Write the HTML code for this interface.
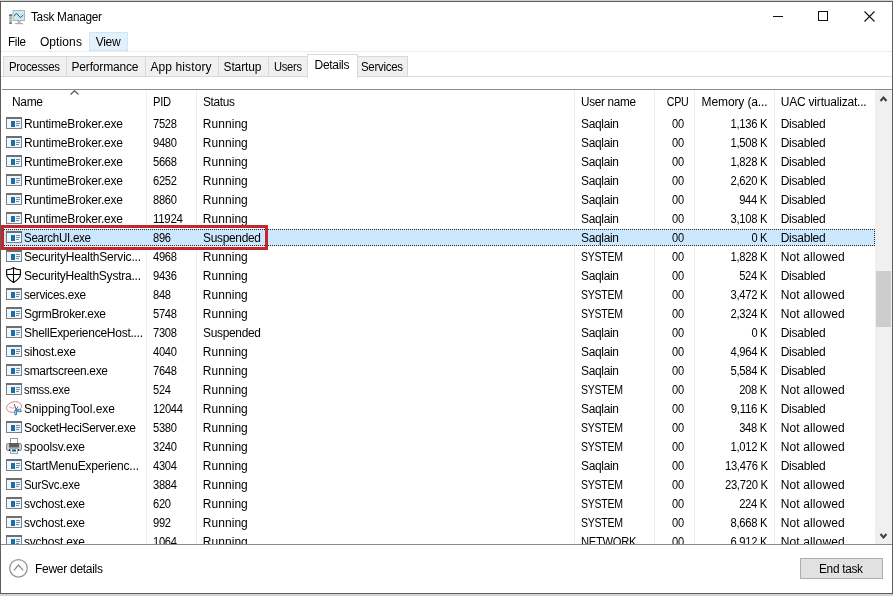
<!DOCTYPE html>
<html><head><meta charset="utf-8"><title>Task Manager</title>
<style>
html,body{margin:0;padding:0;}
body{width:893px;height:596px;overflow:hidden;position:relative;background:#d2d2d2;font-family:"Liberation Sans",sans-serif;}
#win{position:absolute;left:0;top:1px;width:891px;height:591px;border:1px solid #5e5e5e;background:#fff;}
#c{position:absolute;left:0;top:0;width:893px;height:596px;overflow:hidden;will-change:transform;}
.t{position:absolute;white-space:pre;line-height:16px;height:16px;}
.b{position:absolute;}
.ic{position:absolute;}
#list{position:absolute;left:0;top:0;width:893px;height:544px;overflow:hidden;}
</style></head><body>
<div id="win"></div>
<div id="c">

<svg class="ic" style="left:8px;top:9px" width="18" height="16" viewBox="0 0 18 16"><rect x="5" y="1.5" width="11.5" height="10" fill="#c9e9f6" stroke="#aeb4b8"/><path d="M6 7.2 L8.4 4.2 L12.4 8.6 L15.2 6" fill="none" stroke="#3d5866" stroke-width="1"/><rect x="9.5" y="12" width="3" height="2" fill="#b9bdc0"/><rect x="7" y="14" width="8" height="1.2" fill="#a9adb0"/><rect x="1.2" y="5.5" width="2.7" height="9.3" fill="#b4b4b4"/><rect x="1.2" y="5.5" width="2.7" height="1.3" fill="#4a4a4a"/><rect x="1.2" y="13.6" width="2.7" height="1.2" fill="#666"/></svg>
<span class="t" style="left:31.20px;top:8.84px;font-size:12.0px;letter-spacing:-0.300px;color:#000;transform:scaleX(0.9852);transform-origin:left center;">Task Manager</span>
<div class="b" style="left:773px;top:16px;width:10px;height:1px;background:#111"></div>
<div class="b" style="left:818px;top:11px;width:8px;height:8px;border:1px solid #111"></div>
<svg class="ic" style="left:864px;top:11px" width="11" height="11" viewBox="0 0 11 11"><path d="M0.5 0.5 L10.5 10.5 M10.5 0.5 L0.5 10.5" stroke="#111" stroke-width="1.1" fill="none"/></svg>
<div class="b" style="left:89px;top:32px;width:37px;height:17px;background:#e3f1fd;border:1px solid #cfe5f8"></div>
<span class="t" style="left:7.90px;top:33.84px;font-size:12.0px;letter-spacing:-0.300px;color:#000;transform:scaleX(0.9764);transform-origin:left center;">File</span>
<span class="t" style="left:39.90px;top:33.84px;font-size:12.0px;letter-spacing:0.108px;color:#000;">Options</span>
<span class="t" style="left:95.70px;top:33.84px;font-size:12.0px;letter-spacing:-0.264px;color:#000;">View</span>
<div class="b" style="left:1px;top:51px;width:891px;height:1px;background:#ececec"></div>
<div class="b" style="left:1px;top:76px;width:891px;height:1px;background:#dcdcdc"></div>
<div class="b" style="left:3px;top:56px;width:62px;height:19px;background:#f0f0f0;border:1px solid #d9d9d9"></div>
<span class="t" style="left:8.50px;top:58.84px;font-size:12.0px;letter-spacing:-0.300px;color:#000;transform:scaleX(0.9511);transform-origin:left center;">Processes</span>
<div class="b" style="left:66px;top:56px;width:78px;height:19px;background:#f0f0f0;border:1px solid #d9d9d9"></div>
<span class="t" style="left:71.50px;top:58.84px;font-size:12.0px;letter-spacing:-0.170px;color:#000;">Performance</span>
<div class="b" style="left:145px;top:56px;width:72px;height:19px;background:#f0f0f0;border:1px solid #d9d9d9"></div>
<span class="t" style="left:150.50px;top:58.84px;font-size:12.0px;letter-spacing:0.097px;color:#000;">App history</span>
<div class="b" style="left:218px;top:56px;width:49px;height:19px;background:#f0f0f0;border:1px solid #d9d9d9"></div>
<span class="t" style="left:223.50px;top:58.84px;font-size:12.0px;letter-spacing:-0.115px;color:#000;">Startup</span>
<div class="b" style="left:268px;top:56px;width:39px;height:19px;background:#f0f0f0;border:1px solid #d9d9d9"></div>
<span class="t" style="left:273.50px;top:58.84px;font-size:12.0px;letter-spacing:-0.300px;color:#000;transform:scaleX(0.9291);transform-origin:left center;">Users</span>
<div class="b" style="left:307px;top:54px;width:49px;height:23px;background:#fff;border:1px solid #d9d9d9;border-bottom:none"></div>
<span class="t" style="left:314.50px;top:56.84px;font-size:12.0px;letter-spacing:-0.280px;color:#000;">Details</span>
<div class="b" style="left:357px;top:56px;width:49px;height:19px;background:#f0f0f0;border:1px solid #d9d9d9"></div>
<span class="t" style="left:360.50px;top:58.84px;font-size:12.0px;letter-spacing:-0.300px;color:#000;transform:scaleX(0.9564);transform-origin:left center;">Services</span>
<div id="list">
<div class="b" style="left:2px;top:89px;width:890px;height:1px;background:#8a8a8a"></div>
<div class="b" style="left:146px;top:90px;width:1px;height:454px;background:#eeeeee"></div>
<div class="b" style="left:196px;top:90px;width:1px;height:454px;background:#eeeeee"></div>
<div class="b" style="left:574px;top:90px;width:1px;height:454px;background:#eeeeee"></div>
<div class="b" style="left:654px;top:90px;width:1px;height:454px;background:#eeeeee"></div>
<div class="b" style="left:694px;top:90px;width:1px;height:454px;background:#eeeeee"></div>
<div class="b" style="left:774px;top:90px;width:1px;height:454px;background:#eeeeee"></div>
<svg class="ic" style="left:70px;top:90px" width="9" height="5" viewBox="0 0 9 5"><path d="M0.5 4.5 L4.5 0.7 L8.5 4.5" fill="none" stroke="#555" stroke-width="1.2"/></svg>
<span class="t" style="left:11.80px;top:93.84px;font-size:12.0px;letter-spacing:-0.300px;color:#000;transform:scaleX(0.9965);transform-origin:left center;">Name</span>
<span class="t" style="left:152.70px;top:93.84px;font-size:12.0px;letter-spacing:-0.300px;color:#000;transform:scaleX(0.9276);transform-origin:left center;">PID</span>
<span class="t" style="left:202.80px;top:93.84px;font-size:12.0px;letter-spacing:-0.300px;color:#000;transform:scaleX(0.9840);transform-origin:left center;">Status</span>
<span class="t" style="left:580.50px;top:93.84px;font-size:12.0px;letter-spacing:-0.300px;color:#000;transform:scaleX(0.9771);transform-origin:left center;">User name</span>
<span class="t" style="right:204.77px;top:93.84px;font-size:12.0px;letter-spacing:-0.300px;color:#000;transform:scaleX(0.8894);transform-origin:right center;">CPU</span>
<span class="t" style="left:701.60px;top:93.84px;font-size:12.0px;letter-spacing:-0.122px;color:#000;">Memory (a...</span>
<span class="t" style="left:780.70px;top:93.84px;font-size:12.0px;letter-spacing:-0.197px;color:#000;">UAC virtualizat...</span>
<div class="b" style="left:3px;top:229px;width:870px;height:15px;background:#cce8ff;border:1px dotted #2a2a2a"></div>
<svg class="ic" style="left:6px;top:117px" width="16" height="12" viewBox="0 0 16 12"><rect x="0.5" y="0.5" width="15" height="11" fill="#eef7fd" stroke="#7f7f7f"/><rect x="0" y="0" width="16" height="2" fill="#6f6f6f"/><rect x="5" y="4" width="4" height="6" fill="#1f6ea6"/><rect x="10" y="4" width="4" height="1" fill="#6f8ea6"/><rect x="10" y="6" width="4" height="1" fill="#6f8ea6"/><rect x="10" y="8" width="3" height="1" fill="#6f8ea6"/></svg>
<span class="t" style="left:24.00px;top:115.84px;font-size:12.0px;letter-spacing:-0.190px;color:#000;">RuntimeBroker.exe</span>
<span class="t" style="left:152.70px;top:115.84px;font-size:12.0px;letter-spacing:-0.300px;color:#000;transform:scaleX(0.9305);transform-origin:left center;">7528</span>
<span class="t" style="left:202.80px;top:115.84px;font-size:12.0px;letter-spacing:0.050px;color:#000;">Running</span>
<span class="t" style="left:580.50px;top:115.84px;font-size:12.0px;letter-spacing:-0.300px;color:#000;transform:scaleX(0.9940);transform-origin:left center;">Saqlain</span>
<span class="t" style="right:208.78px;top:115.84px;font-size:12.0px;letter-spacing:-0.300px;color:#000;transform:scaleX(0.9198);transform-origin:right center;">00</span>
<span class="t" style="right:125.68px;top:115.84px;font-size:12.0px;letter-spacing:-0.300px;color:#000;transform:scaleX(0.9351);transform-origin:right center;">1,136 K</span>
<span class="t" style="left:780.70px;top:115.84px;font-size:12.0px;letter-spacing:-0.242px;color:#000;">Disabled</span>
<svg class="ic" style="left:6px;top:136px" width="16" height="12" viewBox="0 0 16 12"><rect x="0.5" y="0.5" width="15" height="11" fill="#eef7fd" stroke="#7f7f7f"/><rect x="0" y="0" width="16" height="2" fill="#6f6f6f"/><rect x="5" y="4" width="4" height="6" fill="#1f6ea6"/><rect x="10" y="4" width="4" height="1" fill="#6f8ea6"/><rect x="10" y="6" width="4" height="1" fill="#6f8ea6"/><rect x="10" y="8" width="3" height="1" fill="#6f8ea6"/></svg>
<span class="t" style="left:24.00px;top:134.84px;font-size:12.0px;letter-spacing:-0.190px;color:#000;">RuntimeBroker.exe</span>
<span class="t" style="left:152.70px;top:134.84px;font-size:12.0px;letter-spacing:-0.300px;color:#000;transform:scaleX(0.9305);transform-origin:left center;">9480</span>
<span class="t" style="left:202.80px;top:134.84px;font-size:12.0px;letter-spacing:0.050px;color:#000;">Running</span>
<span class="t" style="left:580.50px;top:134.84px;font-size:12.0px;letter-spacing:-0.300px;color:#000;transform:scaleX(0.9940);transform-origin:left center;">Saqlain</span>
<span class="t" style="right:208.78px;top:134.84px;font-size:12.0px;letter-spacing:-0.300px;color:#000;transform:scaleX(0.9198);transform-origin:right center;">00</span>
<span class="t" style="right:125.68px;top:134.84px;font-size:12.0px;letter-spacing:-0.300px;color:#000;transform:scaleX(0.9351);transform-origin:right center;">1,508 K</span>
<span class="t" style="left:780.70px;top:134.84px;font-size:12.0px;letter-spacing:-0.242px;color:#000;">Disabled</span>
<svg class="ic" style="left:6px;top:155px" width="16" height="12" viewBox="0 0 16 12"><rect x="0.5" y="0.5" width="15" height="11" fill="#eef7fd" stroke="#7f7f7f"/><rect x="0" y="0" width="16" height="2" fill="#6f6f6f"/><rect x="5" y="4" width="4" height="6" fill="#1f6ea6"/><rect x="10" y="4" width="4" height="1" fill="#6f8ea6"/><rect x="10" y="6" width="4" height="1" fill="#6f8ea6"/><rect x="10" y="8" width="3" height="1" fill="#6f8ea6"/></svg>
<span class="t" style="left:24.00px;top:153.84px;font-size:12.0px;letter-spacing:-0.190px;color:#000;">RuntimeBroker.exe</span>
<span class="t" style="left:152.70px;top:153.84px;font-size:12.0px;letter-spacing:-0.300px;color:#000;transform:scaleX(0.9305);transform-origin:left center;">5668</span>
<span class="t" style="left:202.80px;top:153.84px;font-size:12.0px;letter-spacing:0.050px;color:#000;">Running</span>
<span class="t" style="left:580.50px;top:153.84px;font-size:12.0px;letter-spacing:-0.300px;color:#000;transform:scaleX(0.9940);transform-origin:left center;">Saqlain</span>
<span class="t" style="right:208.78px;top:153.84px;font-size:12.0px;letter-spacing:-0.300px;color:#000;transform:scaleX(0.9198);transform-origin:right center;">00</span>
<span class="t" style="right:125.68px;top:153.84px;font-size:12.0px;letter-spacing:-0.300px;color:#000;transform:scaleX(0.9351);transform-origin:right center;">1,828 K</span>
<span class="t" style="left:780.70px;top:153.84px;font-size:12.0px;letter-spacing:-0.242px;color:#000;">Disabled</span>
<svg class="ic" style="left:6px;top:174px" width="16" height="12" viewBox="0 0 16 12"><rect x="0.5" y="0.5" width="15" height="11" fill="#eef7fd" stroke="#7f7f7f"/><rect x="0" y="0" width="16" height="2" fill="#6f6f6f"/><rect x="5" y="4" width="4" height="6" fill="#1f6ea6"/><rect x="10" y="4" width="4" height="1" fill="#6f8ea6"/><rect x="10" y="6" width="4" height="1" fill="#6f8ea6"/><rect x="10" y="8" width="3" height="1" fill="#6f8ea6"/></svg>
<span class="t" style="left:24.00px;top:172.84px;font-size:12.0px;letter-spacing:-0.190px;color:#000;">RuntimeBroker.exe</span>
<span class="t" style="left:152.70px;top:172.84px;font-size:12.0px;letter-spacing:-0.300px;color:#000;transform:scaleX(0.9305);transform-origin:left center;">6252</span>
<span class="t" style="left:202.80px;top:172.84px;font-size:12.0px;letter-spacing:0.050px;color:#000;">Running</span>
<span class="t" style="left:580.50px;top:172.84px;font-size:12.0px;letter-spacing:-0.300px;color:#000;transform:scaleX(0.9940);transform-origin:left center;">Saqlain</span>
<span class="t" style="right:208.78px;top:172.84px;font-size:12.0px;letter-spacing:-0.300px;color:#000;transform:scaleX(0.9198);transform-origin:right center;">00</span>
<span class="t" style="right:125.68px;top:172.84px;font-size:12.0px;letter-spacing:-0.300px;color:#000;transform:scaleX(0.9351);transform-origin:right center;">2,620 K</span>
<span class="t" style="left:780.70px;top:172.84px;font-size:12.0px;letter-spacing:-0.242px;color:#000;">Disabled</span>
<svg class="ic" style="left:6px;top:193px" width="16" height="12" viewBox="0 0 16 12"><rect x="0.5" y="0.5" width="15" height="11" fill="#eef7fd" stroke="#7f7f7f"/><rect x="0" y="0" width="16" height="2" fill="#6f6f6f"/><rect x="5" y="4" width="4" height="6" fill="#1f6ea6"/><rect x="10" y="4" width="4" height="1" fill="#6f8ea6"/><rect x="10" y="6" width="4" height="1" fill="#6f8ea6"/><rect x="10" y="8" width="3" height="1" fill="#6f8ea6"/></svg>
<span class="t" style="left:24.00px;top:191.84px;font-size:12.0px;letter-spacing:-0.190px;color:#000;">RuntimeBroker.exe</span>
<span class="t" style="left:152.70px;top:191.84px;font-size:12.0px;letter-spacing:-0.300px;color:#000;transform:scaleX(0.9305);transform-origin:left center;">8860</span>
<span class="t" style="left:202.80px;top:191.84px;font-size:12.0px;letter-spacing:0.050px;color:#000;">Running</span>
<span class="t" style="left:580.50px;top:191.84px;font-size:12.0px;letter-spacing:-0.300px;color:#000;transform:scaleX(0.9940);transform-origin:left center;">Saqlain</span>
<span class="t" style="right:208.78px;top:191.84px;font-size:12.0px;letter-spacing:-0.300px;color:#000;transform:scaleX(0.9198);transform-origin:right center;">00</span>
<span class="t" style="right:125.68px;top:191.84px;font-size:12.0px;letter-spacing:-0.300px;color:#000;transform:scaleX(0.9284);transform-origin:right center;">944 K</span>
<span class="t" style="left:780.70px;top:191.84px;font-size:12.0px;letter-spacing:-0.242px;color:#000;">Disabled</span>
<svg class="ic" style="left:6px;top:212px" width="16" height="12" viewBox="0 0 16 12"><rect x="0.5" y="0.5" width="15" height="11" fill="#eef7fd" stroke="#7f7f7f"/><rect x="0" y="0" width="16" height="2" fill="#6f6f6f"/><rect x="5" y="4" width="4" height="6" fill="#1f6ea6"/><rect x="10" y="4" width="4" height="1" fill="#6f8ea6"/><rect x="10" y="6" width="4" height="1" fill="#6f8ea6"/><rect x="10" y="8" width="3" height="1" fill="#6f8ea6"/></svg>
<span class="t" style="left:24.00px;top:210.84px;font-size:12.0px;letter-spacing:-0.190px;color:#000;">RuntimeBroker.exe</span>
<span class="t" style="left:152.70px;top:210.84px;font-size:12.0px;letter-spacing:-0.300px;color:#000;transform:scaleX(0.9592);transform-origin:left center;">11924</span>
<span class="t" style="left:202.80px;top:210.84px;font-size:12.0px;letter-spacing:0.050px;color:#000;">Running</span>
<span class="t" style="left:580.50px;top:210.84px;font-size:12.0px;letter-spacing:-0.300px;color:#000;transform:scaleX(0.9940);transform-origin:left center;">Saqlain</span>
<span class="t" style="right:208.78px;top:210.84px;font-size:12.0px;letter-spacing:-0.300px;color:#000;transform:scaleX(0.9198);transform-origin:right center;">00</span>
<span class="t" style="right:125.68px;top:210.84px;font-size:12.0px;letter-spacing:-0.300px;color:#000;transform:scaleX(0.9351);transform-origin:right center;">3,108 K</span>
<span class="t" style="left:780.70px;top:210.84px;font-size:12.0px;letter-spacing:-0.242px;color:#000;">Disabled</span>
<svg class="ic" style="left:6px;top:231px" width="16" height="12" viewBox="0 0 16 12"><rect x="0.5" y="0.5" width="15" height="11" fill="#eef7fd" stroke="#7f7f7f"/><rect x="0" y="0" width="16" height="2" fill="#6f6f6f"/><rect x="5" y="4" width="4" height="6" fill="#1f6ea6"/><rect x="10" y="4" width="4" height="1" fill="#6f8ea6"/><rect x="10" y="6" width="4" height="1" fill="#6f8ea6"/><rect x="10" y="8" width="3" height="1" fill="#6f8ea6"/></svg>
<span class="t" style="left:24.00px;top:229.84px;font-size:12.0px;letter-spacing:-0.300px;color:#000;transform:scaleX(0.9654);transform-origin:left center;">SearchUI.exe</span>
<span class="t" style="left:152.70px;top:229.84px;font-size:12.0px;letter-spacing:-0.300px;color:#000;transform:scaleX(0.9269);transform-origin:left center;">896</span>
<span class="t" style="left:202.80px;top:229.84px;font-size:12.0px;letter-spacing:-0.300px;color:#000;transform:scaleX(0.9945);transform-origin:left center;">Suspended</span>
<span class="t" style="left:580.50px;top:229.84px;font-size:12.0px;letter-spacing:-0.300px;color:#000;transform:scaleX(0.9940);transform-origin:left center;">Saqlain</span>
<span class="t" style="right:208.78px;top:229.84px;font-size:12.0px;letter-spacing:-0.300px;color:#000;transform:scaleX(0.9198);transform-origin:right center;">00</span>
<span class="t" style="right:125.68px;top:229.84px;font-size:12.0px;letter-spacing:-0.300px;color:#000;transform:scaleX(0.9189);transform-origin:right center;">0 K</span>
<span class="t" style="left:780.70px;top:229.84px;font-size:12.0px;letter-spacing:-0.242px;color:#000;">Disabled</span>
<svg class="ic" style="left:6px;top:250px" width="16" height="12" viewBox="0 0 16 12"><rect x="0.5" y="0.5" width="15" height="11" fill="#eef7fd" stroke="#7f7f7f"/><rect x="0" y="0" width="16" height="2" fill="#6f6f6f"/><rect x="5" y="4" width="4" height="6" fill="#1f6ea6"/><rect x="10" y="4" width="4" height="1" fill="#6f8ea6"/><rect x="10" y="6" width="4" height="1" fill="#6f8ea6"/><rect x="10" y="8" width="3" height="1" fill="#6f8ea6"/></svg>
<span class="t" style="left:24.00px;top:248.84px;font-size:12.0px;letter-spacing:-0.199px;color:#000;">SecurityHealthServic...</span>
<span class="t" style="left:152.70px;top:248.84px;font-size:12.0px;letter-spacing:-0.300px;color:#000;transform:scaleX(0.9305);transform-origin:left center;">4968</span>
<span class="t" style="left:202.80px;top:248.84px;font-size:12.0px;letter-spacing:0.050px;color:#000;">Running</span>
<span class="t" style="left:580.50px;top:248.84px;font-size:12.0px;letter-spacing:-0.300px;color:#000;transform:scaleX(0.8778);transform-origin:left center;">SYSTEM</span>
<span class="t" style="right:208.78px;top:248.84px;font-size:12.0px;letter-spacing:-0.300px;color:#000;transform:scaleX(0.9198);transform-origin:right center;">00</span>
<span class="t" style="right:125.68px;top:248.84px;font-size:12.0px;letter-spacing:-0.300px;color:#000;transform:scaleX(0.9351);transform-origin:right center;">1,828 K</span>
<span class="t" style="left:780.70px;top:248.84px;font-size:12.0px;letter-spacing:0.130px;color:#000;">Not allowed</span>
<svg class="ic" style="left:6px;top:267px" width="16" height="16" viewBox="0 0 16 16"><path d="M7.5 0.6 C5.5 2.2 3 2.7 0.6 2.7 V8 Q1.3 11.9 7.5 15.4 Q13.7 11.9 14.4 8 V2.7 C12 2.7 9.5 2.2 7.5 0.6 Z M7.5 0.6 V15.4 M0.6 7.5 H14.4" fill="none" stroke="#000" stroke-width="1.1"/></svg>
<span class="t" style="left:24.00px;top:267.84px;font-size:12.0px;letter-spacing:-0.229px;color:#000;">SecurityHealthSystra...</span>
<span class="t" style="left:152.70px;top:267.84px;font-size:12.0px;letter-spacing:-0.300px;color:#000;transform:scaleX(0.9305);transform-origin:left center;">9436</span>
<span class="t" style="left:202.80px;top:267.84px;font-size:12.0px;letter-spacing:0.050px;color:#000;">Running</span>
<span class="t" style="left:580.50px;top:267.84px;font-size:12.0px;letter-spacing:-0.300px;color:#000;transform:scaleX(0.9940);transform-origin:left center;">Saqlain</span>
<span class="t" style="right:208.78px;top:267.84px;font-size:12.0px;letter-spacing:-0.300px;color:#000;transform:scaleX(0.9198);transform-origin:right center;">00</span>
<span class="t" style="right:125.68px;top:267.84px;font-size:12.0px;letter-spacing:-0.300px;color:#000;transform:scaleX(0.9284);transform-origin:right center;">524 K</span>
<span class="t" style="left:780.70px;top:267.84px;font-size:12.0px;letter-spacing:-0.242px;color:#000;">Disabled</span>
<svg class="ic" style="left:6px;top:288px" width="16" height="12" viewBox="0 0 16 12"><rect x="0.5" y="0.5" width="15" height="11" fill="#eef7fd" stroke="#7f7f7f"/><rect x="0" y="0" width="16" height="2" fill="#6f6f6f"/><rect x="5" y="4" width="4" height="6" fill="#1f6ea6"/><rect x="10" y="4" width="4" height="1" fill="#6f8ea6"/><rect x="10" y="6" width="4" height="1" fill="#6f8ea6"/><rect x="10" y="8" width="3" height="1" fill="#6f8ea6"/></svg>
<span class="t" style="left:24.00px;top:286.84px;font-size:12.0px;letter-spacing:-0.300px;color:#000;transform:scaleX(0.9781);transform-origin:left center;">services.exe</span>
<span class="t" style="left:152.70px;top:286.84px;font-size:12.0px;letter-spacing:-0.300px;color:#000;transform:scaleX(0.9269);transform-origin:left center;">848</span>
<span class="t" style="left:202.80px;top:286.84px;font-size:12.0px;letter-spacing:0.050px;color:#000;">Running</span>
<span class="t" style="left:580.50px;top:286.84px;font-size:12.0px;letter-spacing:-0.300px;color:#000;transform:scaleX(0.8778);transform-origin:left center;">SYSTEM</span>
<span class="t" style="right:208.78px;top:286.84px;font-size:12.0px;letter-spacing:-0.300px;color:#000;transform:scaleX(0.9198);transform-origin:right center;">00</span>
<span class="t" style="right:125.68px;top:286.84px;font-size:12.0px;letter-spacing:-0.300px;color:#000;transform:scaleX(0.9351);transform-origin:right center;">3,472 K</span>
<span class="t" style="left:780.70px;top:286.84px;font-size:12.0px;letter-spacing:0.130px;color:#000;">Not allowed</span>
<svg class="ic" style="left:6px;top:307px" width="16" height="12" viewBox="0 0 16 12"><rect x="0.5" y="0.5" width="15" height="11" fill="#eef7fd" stroke="#7f7f7f"/><rect x="0" y="0" width="16" height="2" fill="#6f6f6f"/><rect x="5" y="4" width="4" height="6" fill="#1f6ea6"/><rect x="10" y="4" width="4" height="1" fill="#6f8ea6"/><rect x="10" y="6" width="4" height="1" fill="#6f8ea6"/><rect x="10" y="8" width="3" height="1" fill="#6f8ea6"/></svg>
<span class="t" style="left:24.00px;top:305.84px;font-size:12.0px;letter-spacing:-0.300px;color:#000;transform:scaleX(0.9983);transform-origin:left center;">SgrmBroker.exe</span>
<span class="t" style="left:152.70px;top:305.84px;font-size:12.0px;letter-spacing:-0.300px;color:#000;transform:scaleX(0.9305);transform-origin:left center;">5748</span>
<span class="t" style="left:202.80px;top:305.84px;font-size:12.0px;letter-spacing:0.050px;color:#000;">Running</span>
<span class="t" style="left:580.50px;top:305.84px;font-size:12.0px;letter-spacing:-0.300px;color:#000;transform:scaleX(0.8778);transform-origin:left center;">SYSTEM</span>
<span class="t" style="right:208.78px;top:305.84px;font-size:12.0px;letter-spacing:-0.300px;color:#000;transform:scaleX(0.9198);transform-origin:right center;">00</span>
<span class="t" style="right:125.68px;top:305.84px;font-size:12.0px;letter-spacing:-0.300px;color:#000;transform:scaleX(0.9351);transform-origin:right center;">2,324 K</span>
<span class="t" style="left:780.70px;top:305.84px;font-size:12.0px;letter-spacing:0.130px;color:#000;">Not allowed</span>
<svg class="ic" style="left:6px;top:326px" width="16" height="12" viewBox="0 0 16 12"><rect x="0.5" y="0.5" width="15" height="11" fill="#eef7fd" stroke="#7f7f7f"/><rect x="0" y="0" width="16" height="2" fill="#6f6f6f"/><rect x="5" y="4" width="4" height="6" fill="#1f6ea6"/><rect x="10" y="4" width="4" height="1" fill="#6f8ea6"/><rect x="10" y="6" width="4" height="1" fill="#6f8ea6"/><rect x="10" y="8" width="3" height="1" fill="#6f8ea6"/></svg>
<span class="t" style="left:24.00px;top:324.84px;font-size:12.0px;letter-spacing:-0.260px;color:#000;">ShellExperienceHost....</span>
<span class="t" style="left:152.70px;top:324.84px;font-size:12.0px;letter-spacing:-0.300px;color:#000;transform:scaleX(0.9305);transform-origin:left center;">7308</span>
<span class="t" style="left:202.80px;top:324.84px;font-size:12.0px;letter-spacing:-0.300px;color:#000;transform:scaleX(0.9945);transform-origin:left center;">Suspended</span>
<span class="t" style="left:580.50px;top:324.84px;font-size:12.0px;letter-spacing:-0.300px;color:#000;transform:scaleX(0.9940);transform-origin:left center;">Saqlain</span>
<span class="t" style="right:208.78px;top:324.84px;font-size:12.0px;letter-spacing:-0.300px;color:#000;transform:scaleX(0.9198);transform-origin:right center;">00</span>
<span class="t" style="right:125.68px;top:324.84px;font-size:12.0px;letter-spacing:-0.300px;color:#000;transform:scaleX(0.9189);transform-origin:right center;">0 K</span>
<span class="t" style="left:780.70px;top:324.84px;font-size:12.0px;letter-spacing:-0.242px;color:#000;">Disabled</span>
<svg class="ic" style="left:6px;top:345px" width="16" height="12" viewBox="0 0 16 12"><rect x="0.5" y="0.5" width="15" height="11" fill="#eef7fd" stroke="#7f7f7f"/><rect x="0" y="0" width="16" height="2" fill="#6f6f6f"/><rect x="5" y="4" width="4" height="6" fill="#1f6ea6"/><rect x="10" y="4" width="4" height="1" fill="#6f8ea6"/><rect x="10" y="6" width="4" height="1" fill="#6f8ea6"/><rect x="10" y="8" width="3" height="1" fill="#6f8ea6"/></svg>
<span class="t" style="left:24.00px;top:343.84px;font-size:12.0px;letter-spacing:-0.225px;color:#000;">sihost.exe</span>
<span class="t" style="left:152.70px;top:343.84px;font-size:12.0px;letter-spacing:-0.300px;color:#000;transform:scaleX(0.9305);transform-origin:left center;">4040</span>
<span class="t" style="left:202.80px;top:343.84px;font-size:12.0px;letter-spacing:0.050px;color:#000;">Running</span>
<span class="t" style="left:580.50px;top:343.84px;font-size:12.0px;letter-spacing:-0.300px;color:#000;transform:scaleX(0.9940);transform-origin:left center;">Saqlain</span>
<span class="t" style="right:208.78px;top:343.84px;font-size:12.0px;letter-spacing:-0.300px;color:#000;transform:scaleX(0.9198);transform-origin:right center;">00</span>
<span class="t" style="right:125.68px;top:343.84px;font-size:12.0px;letter-spacing:-0.300px;color:#000;transform:scaleX(0.9351);transform-origin:right center;">4,964 K</span>
<span class="t" style="left:780.70px;top:343.84px;font-size:12.0px;letter-spacing:-0.242px;color:#000;">Disabled</span>
<svg class="ic" style="left:6px;top:364px" width="16" height="12" viewBox="0 0 16 12"><rect x="0.5" y="0.5" width="15" height="11" fill="#eef7fd" stroke="#7f7f7f"/><rect x="0" y="0" width="16" height="2" fill="#6f6f6f"/><rect x="5" y="4" width="4" height="6" fill="#1f6ea6"/><rect x="10" y="4" width="4" height="1" fill="#6f8ea6"/><rect x="10" y="6" width="4" height="1" fill="#6f8ea6"/><rect x="10" y="8" width="3" height="1" fill="#6f8ea6"/></svg>
<span class="t" style="left:24.00px;top:362.84px;font-size:12.0px;letter-spacing:-0.300px;color:#000;transform:scaleX(0.9941);transform-origin:left center;">smartscreen.exe</span>
<span class="t" style="left:152.70px;top:362.84px;font-size:12.0px;letter-spacing:-0.300px;color:#000;transform:scaleX(0.9305);transform-origin:left center;">7648</span>
<span class="t" style="left:202.80px;top:362.84px;font-size:12.0px;letter-spacing:0.050px;color:#000;">Running</span>
<span class="t" style="left:580.50px;top:362.84px;font-size:12.0px;letter-spacing:-0.300px;color:#000;transform:scaleX(0.9940);transform-origin:left center;">Saqlain</span>
<span class="t" style="right:208.78px;top:362.84px;font-size:12.0px;letter-spacing:-0.300px;color:#000;transform:scaleX(0.9198);transform-origin:right center;">00</span>
<span class="t" style="right:125.68px;top:362.84px;font-size:12.0px;letter-spacing:-0.300px;color:#000;transform:scaleX(0.9351);transform-origin:right center;">5,584 K</span>
<span class="t" style="left:780.70px;top:362.84px;font-size:12.0px;letter-spacing:-0.242px;color:#000;">Disabled</span>
<svg class="ic" style="left:6px;top:383px" width="16" height="12" viewBox="0 0 16 12"><rect x="0.5" y="0.5" width="15" height="11" fill="#eef7fd" stroke="#7f7f7f"/><rect x="0" y="0" width="16" height="2" fill="#6f6f6f"/><rect x="5" y="4" width="4" height="6" fill="#1f6ea6"/><rect x="10" y="4" width="4" height="1" fill="#6f8ea6"/><rect x="10" y="6" width="4" height="1" fill="#6f8ea6"/><rect x="10" y="8" width="3" height="1" fill="#6f8ea6"/></svg>
<span class="t" style="left:24.00px;top:381.84px;font-size:12.0px;letter-spacing:-0.300px;color:#000;transform:scaleX(0.9469);transform-origin:left center;">smss.exe</span>
<span class="t" style="left:152.70px;top:381.84px;font-size:12.0px;letter-spacing:-0.300px;color:#000;transform:scaleX(0.9269);transform-origin:left center;">524</span>
<span class="t" style="left:202.80px;top:381.84px;font-size:12.0px;letter-spacing:0.050px;color:#000;">Running</span>
<span class="t" style="left:580.50px;top:381.84px;font-size:12.0px;letter-spacing:-0.300px;color:#000;transform:scaleX(0.8778);transform-origin:left center;">SYSTEM</span>
<span class="t" style="right:208.78px;top:381.84px;font-size:12.0px;letter-spacing:-0.300px;color:#000;transform:scaleX(0.9198);transform-origin:right center;">00</span>
<span class="t" style="right:125.68px;top:381.84px;font-size:12.0px;letter-spacing:-0.300px;color:#000;transform:scaleX(0.9284);transform-origin:right center;">208 K</span>
<span class="t" style="left:780.70px;top:381.84px;font-size:12.0px;letter-spacing:0.130px;color:#000;">Not allowed</span>
<svg class="ic" style="left:6px;top:400px" width="17" height="17" viewBox="0 0 17 17"><ellipse cx="8" cy="7" rx="7.6" ry="5.2" transform="rotate(-14 8 7)" fill="none" stroke="#d9808c" stroke-width="0.9"/><path d="M3 6.5 C5 8.5 7 8.3 8.5 7.5" fill="none" stroke="#d9808c" stroke-width="0.8"/><path d="M8.2 4 L10.2 9.5 M12.2 6.5 L9.6 9.8" fill="none" stroke="#555" stroke-width="0.9"/><path d="M9.8 9.5 C8.2 11 8.4 14.5 9.8 15 C11.2 14.8 10.8 11 9.8 9.5 Z M10.2 9.6 C12.5 8.6 15.5 9.6 15.3 11 C14.8 12.6 11.6 11.6 10.2 9.6 Z" fill="none" stroke="#3a86b8" stroke-width="1.05"/></svg>
<span class="t" style="left:24.00px;top:400.84px;font-size:12.0px;letter-spacing:-0.026px;color:#000;">SnippingTool.exe</span>
<span class="t" style="left:152.70px;top:400.84px;font-size:12.0px;letter-spacing:-0.300px;color:#000;transform:scaleX(0.9326);transform-origin:left center;">12044</span>
<span class="t" style="left:202.80px;top:400.84px;font-size:12.0px;letter-spacing:0.050px;color:#000;">Running</span>
<span class="t" style="left:580.50px;top:400.84px;font-size:12.0px;letter-spacing:-0.300px;color:#000;transform:scaleX(0.9940);transform-origin:left center;">Saqlain</span>
<span class="t" style="right:208.78px;top:400.84px;font-size:12.0px;letter-spacing:-0.300px;color:#000;transform:scaleX(0.9198);transform-origin:right center;">00</span>
<span class="t" style="right:125.69px;top:400.84px;font-size:12.0px;letter-spacing:-0.300px;color:#000;transform:scaleX(0.9567);transform-origin:right center;">9,116 K</span>
<span class="t" style="left:780.70px;top:400.84px;font-size:12.0px;letter-spacing:-0.242px;color:#000;">Disabled</span>
<svg class="ic" style="left:6px;top:421px" width="16" height="12" viewBox="0 0 16 12"><rect x="0.5" y="0.5" width="15" height="11" fill="#eef7fd" stroke="#7f7f7f"/><rect x="0" y="0" width="16" height="2" fill="#6f6f6f"/><rect x="5" y="4" width="4" height="6" fill="#1f6ea6"/><rect x="10" y="4" width="4" height="1" fill="#6f8ea6"/><rect x="10" y="6" width="4" height="1" fill="#6f8ea6"/><rect x="10" y="8" width="3" height="1" fill="#6f8ea6"/></svg>
<span class="t" style="left:24.00px;top:419.84px;font-size:12.0px;letter-spacing:-0.300px;color:#000;transform:scaleX(0.9968);transform-origin:left center;">SocketHeciServer.exe</span>
<span class="t" style="left:152.70px;top:419.84px;font-size:12.0px;letter-spacing:-0.300px;color:#000;transform:scaleX(0.9305);transform-origin:left center;">5380</span>
<span class="t" style="left:202.80px;top:419.84px;font-size:12.0px;letter-spacing:0.050px;color:#000;">Running</span>
<span class="t" style="left:580.50px;top:419.84px;font-size:12.0px;letter-spacing:-0.300px;color:#000;transform:scaleX(0.8778);transform-origin:left center;">SYSTEM</span>
<span class="t" style="right:208.78px;top:419.84px;font-size:12.0px;letter-spacing:-0.300px;color:#000;transform:scaleX(0.9198);transform-origin:right center;">00</span>
<span class="t" style="right:125.68px;top:419.84px;font-size:12.0px;letter-spacing:-0.300px;color:#000;transform:scaleX(0.9284);transform-origin:right center;">348 K</span>
<span class="t" style="left:780.70px;top:419.84px;font-size:12.0px;letter-spacing:0.130px;color:#000;">Not allowed</span>
<svg class="ic" style="left:6px;top:438px" width="16" height="16" viewBox="0 0 16 16"><rect x="4.5" y="0.5" width="7" height="6" fill="#fff" stroke="#9a9a9a"/><rect x="0.5" y="5.5" width="15" height="7" rx="1.5" fill="#d0d0d0" stroke="#8a8a8a"/><rect x="3" y="5" width="10" height="4.5" fill="#5e5e5e"/><rect x="4.5" y="10.5" width="7" height="5" fill="#e4f6fa" stroke="#9ab"/><rect x="3" y="11" width="1" height="2" fill="#222"/><rect x="12" y="11" width="1" height="2" fill="#222"/><rect x="6" y="11.5" width="4" height="2" fill="#235866"/></svg>
<span class="t" style="left:24.00px;top:438.84px;font-size:12.0px;letter-spacing:-0.148px;color:#000;">spoolsv.exe</span>
<span class="t" style="left:152.70px;top:438.84px;font-size:12.0px;letter-spacing:-0.300px;color:#000;transform:scaleX(0.9305);transform-origin:left center;">3240</span>
<span class="t" style="left:202.80px;top:438.84px;font-size:12.0px;letter-spacing:0.050px;color:#000;">Running</span>
<span class="t" style="left:580.50px;top:438.84px;font-size:12.0px;letter-spacing:-0.300px;color:#000;transform:scaleX(0.8778);transform-origin:left center;">SYSTEM</span>
<span class="t" style="right:208.78px;top:438.84px;font-size:12.0px;letter-spacing:-0.300px;color:#000;transform:scaleX(0.9198);transform-origin:right center;">00</span>
<span class="t" style="right:125.68px;top:438.84px;font-size:12.0px;letter-spacing:-0.300px;color:#000;transform:scaleX(0.9351);transform-origin:right center;">1,012 K</span>
<span class="t" style="left:780.70px;top:438.84px;font-size:12.0px;letter-spacing:0.130px;color:#000;">Not allowed</span>
<svg class="ic" style="left:6px;top:459px" width="16" height="12" viewBox="0 0 16 12"><rect x="0.5" y="0.5" width="15" height="11" fill="#eef7fd" stroke="#7f7f7f"/><rect x="0" y="0" width="16" height="2" fill="#6f6f6f"/><rect x="5" y="4" width="4" height="6" fill="#1f6ea6"/><rect x="10" y="4" width="4" height="1" fill="#6f8ea6"/><rect x="10" y="6" width="4" height="1" fill="#6f8ea6"/><rect x="10" y="8" width="3" height="1" fill="#6f8ea6"/></svg>
<span class="t" style="left:24.00px;top:457.84px;font-size:12.0px;letter-spacing:-0.186px;color:#000;">StartMenuExperienc...</span>
<span class="t" style="left:152.70px;top:457.84px;font-size:12.0px;letter-spacing:-0.300px;color:#000;transform:scaleX(0.9305);transform-origin:left center;">4304</span>
<span class="t" style="left:202.80px;top:457.84px;font-size:12.0px;letter-spacing:0.050px;color:#000;">Running</span>
<span class="t" style="left:580.50px;top:457.84px;font-size:12.0px;letter-spacing:-0.300px;color:#000;transform:scaleX(0.9940);transform-origin:left center;">Saqlain</span>
<span class="t" style="right:208.78px;top:457.84px;font-size:12.0px;letter-spacing:-0.300px;color:#000;transform:scaleX(0.9198);transform-origin:right center;">00</span>
<span class="t" style="right:125.68px;top:457.84px;font-size:12.0px;letter-spacing:-0.300px;color:#000;transform:scaleX(0.9360);transform-origin:right center;">13,476 K</span>
<span class="t" style="left:780.70px;top:457.84px;font-size:12.0px;letter-spacing:-0.242px;color:#000;">Disabled</span>
<svg class="ic" style="left:6px;top:478px" width="16" height="12" viewBox="0 0 16 12"><rect x="0.5" y="0.5" width="15" height="11" fill="#eef7fd" stroke="#7f7f7f"/><rect x="0" y="0" width="16" height="2" fill="#6f6f6f"/><rect x="5" y="4" width="4" height="6" fill="#1f6ea6"/><rect x="10" y="4" width="4" height="1" fill="#6f8ea6"/><rect x="10" y="6" width="4" height="1" fill="#6f8ea6"/><rect x="10" y="8" width="3" height="1" fill="#6f8ea6"/></svg>
<span class="t" style="left:24.00px;top:476.84px;font-size:12.0px;letter-spacing:-0.300px;color:#000;transform:scaleX(0.9546);transform-origin:left center;">SurSvc.exe</span>
<span class="t" style="left:152.70px;top:476.84px;font-size:12.0px;letter-spacing:-0.300px;color:#000;transform:scaleX(0.9305);transform-origin:left center;">3884</span>
<span class="t" style="left:202.80px;top:476.84px;font-size:12.0px;letter-spacing:0.050px;color:#000;">Running</span>
<span class="t" style="left:580.50px;top:476.84px;font-size:12.0px;letter-spacing:-0.300px;color:#000;transform:scaleX(0.8778);transform-origin:left center;">SYSTEM</span>
<span class="t" style="right:208.78px;top:476.84px;font-size:12.0px;letter-spacing:-0.300px;color:#000;transform:scaleX(0.9198);transform-origin:right center;">00</span>
<span class="t" style="right:125.68px;top:476.84px;font-size:12.0px;letter-spacing:-0.300px;color:#000;transform:scaleX(0.9360);transform-origin:right center;">23,720 K</span>
<span class="t" style="left:780.70px;top:476.84px;font-size:12.0px;letter-spacing:0.130px;color:#000;">Not allowed</span>
<svg class="ic" style="left:6px;top:497px" width="16" height="12" viewBox="0 0 16 12"><rect x="0.5" y="0.5" width="15" height="11" fill="#eef7fd" stroke="#7f7f7f"/><rect x="0" y="0" width="16" height="2" fill="#6f6f6f"/><rect x="5" y="4" width="4" height="6" fill="#1f6ea6"/><rect x="10" y="4" width="4" height="1" fill="#6f8ea6"/><rect x="10" y="6" width="4" height="1" fill="#6f8ea6"/><rect x="10" y="8" width="3" height="1" fill="#6f8ea6"/></svg>
<span class="t" style="left:24.00px;top:495.84px;font-size:12.0px;letter-spacing:-0.236px;color:#000;">svchost.exe</span>
<span class="t" style="left:152.70px;top:495.84px;font-size:12.0px;letter-spacing:-0.300px;color:#000;transform:scaleX(0.9269);transform-origin:left center;">620</span>
<span class="t" style="left:202.80px;top:495.84px;font-size:12.0px;letter-spacing:0.050px;color:#000;">Running</span>
<span class="t" style="left:580.50px;top:495.84px;font-size:12.0px;letter-spacing:-0.300px;color:#000;transform:scaleX(0.8778);transform-origin:left center;">SYSTEM</span>
<span class="t" style="right:208.78px;top:495.84px;font-size:12.0px;letter-spacing:-0.300px;color:#000;transform:scaleX(0.9198);transform-origin:right center;">00</span>
<span class="t" style="right:125.68px;top:495.84px;font-size:12.0px;letter-spacing:-0.300px;color:#000;transform:scaleX(0.9284);transform-origin:right center;">224 K</span>
<span class="t" style="left:780.70px;top:495.84px;font-size:12.0px;letter-spacing:0.130px;color:#000;">Not allowed</span>
<svg class="ic" style="left:6px;top:516px" width="16" height="12" viewBox="0 0 16 12"><rect x="0.5" y="0.5" width="15" height="11" fill="#eef7fd" stroke="#7f7f7f"/><rect x="0" y="0" width="16" height="2" fill="#6f6f6f"/><rect x="5" y="4" width="4" height="6" fill="#1f6ea6"/><rect x="10" y="4" width="4" height="1" fill="#6f8ea6"/><rect x="10" y="6" width="4" height="1" fill="#6f8ea6"/><rect x="10" y="8" width="3" height="1" fill="#6f8ea6"/></svg>
<span class="t" style="left:24.00px;top:514.84px;font-size:12.0px;letter-spacing:-0.236px;color:#000;">svchost.exe</span>
<span class="t" style="left:152.70px;top:514.84px;font-size:12.0px;letter-spacing:-0.300px;color:#000;transform:scaleX(0.9269);transform-origin:left center;">992</span>
<span class="t" style="left:202.80px;top:514.84px;font-size:12.0px;letter-spacing:0.050px;color:#000;">Running</span>
<span class="t" style="left:580.50px;top:514.84px;font-size:12.0px;letter-spacing:-0.300px;color:#000;transform:scaleX(0.8778);transform-origin:left center;">SYSTEM</span>
<span class="t" style="right:208.78px;top:514.84px;font-size:12.0px;letter-spacing:-0.300px;color:#000;transform:scaleX(0.9198);transform-origin:right center;">00</span>
<span class="t" style="right:125.68px;top:514.84px;font-size:12.0px;letter-spacing:-0.300px;color:#000;transform:scaleX(0.9351);transform-origin:right center;">8,668 K</span>
<span class="t" style="left:780.70px;top:514.84px;font-size:12.0px;letter-spacing:0.130px;color:#000;">Not allowed</span>
<svg class="ic" style="left:6px;top:535px" width="16" height="12" viewBox="0 0 16 12"><rect x="0.5" y="0.5" width="15" height="11" fill="#eef7fd" stroke="#7f7f7f"/><rect x="0" y="0" width="16" height="2" fill="#6f6f6f"/><rect x="5" y="4" width="4" height="6" fill="#1f6ea6"/><rect x="10" y="4" width="4" height="1" fill="#6f8ea6"/><rect x="10" y="6" width="4" height="1" fill="#6f8ea6"/><rect x="10" y="8" width="3" height="1" fill="#6f8ea6"/></svg>
<span class="t" style="left:24.00px;top:533.84px;font-size:12.0px;letter-spacing:-0.236px;color:#000;">svchost.exe</span>
<span class="t" style="left:152.70px;top:533.84px;font-size:12.0px;letter-spacing:-0.300px;color:#000;transform:scaleX(0.9305);transform-origin:left center;">1064</span>
<span class="t" style="left:202.80px;top:533.84px;font-size:12.0px;letter-spacing:0.050px;color:#000;">Running</span>
<span class="t" style="left:580.50px;top:533.84px;font-size:12.0px;letter-spacing:-0.300px;color:#000;transform:scaleX(0.9325);transform-origin:left center;">NETWORK...</span>
<span class="t" style="right:208.78px;top:533.84px;font-size:12.0px;letter-spacing:-0.300px;color:#000;transform:scaleX(0.9198);transform-origin:right center;">00</span>
<span class="t" style="right:125.68px;top:533.84px;font-size:12.0px;letter-spacing:-0.300px;color:#000;transform:scaleX(0.9351);transform-origin:right center;">6,912 K</span>
<span class="t" style="left:780.70px;top:533.84px;font-size:12.0px;letter-spacing:0.130px;color:#000;">Not allowed</span>
<div class="b" style="left:1px;top:225px;width:261px;height:19px;border:3px solid #c4262e"></div>
<div class="b" style="left:875px;top:90px;width:17px;height:454px;background:#f0f0f0"></div>
<div class="b" style="left:876px;top:271px;width:15px;height:56px;background:#cdcdcd"></div>
<svg class="ic" style="left:879px;top:95px" width="9" height="8" viewBox="0 0 9 8"><path d="M1.5 6 L4.5 2.6 L7.5 6" fill="none" stroke="#3e3e3e" stroke-width="2"/></svg>
<svg class="ic" style="left:879px;top:532px" width="9" height="8" viewBox="0 0 9 8"><path d="M1.5 2 L4.5 5.4 L7.5 2" fill="none" stroke="#3e3e3e" stroke-width="2"/></svg>
</div>
<div class="b" style="left:1px;top:544px;width:891px;height:1px;background:#8a8a8a"></div>
<svg class="ic" style="left:8px;top:558px" width="21" height="21" viewBox="0 0 21 21"><circle cx="10.5" cy="10.3" r="8.8" fill="#fff" stroke="#939393" stroke-width="1.25"/><path d="M5.9 12.4 L10.5 7.1 L15.1 12.4" fill="none" stroke="#8a8a8a" stroke-width="1.3"/></svg>
<span class="t" style="left:35.00px;top:560.84px;font-size:12.0px;letter-spacing:-0.280px;color:#000;">Fewer details</span>
<div class="b" style="left:800px;top:558px;width:81px;height:19px;background:#e1e1e1;border:1px solid #adadad"></div>
<span class="t" style="left:819.00px;top:560.84px;font-size:12.0px;letter-spacing:-0.300px;color:#000;transform:scaleX(0.9867);transform-origin:left center;">End task</span>
</div></body></html>
